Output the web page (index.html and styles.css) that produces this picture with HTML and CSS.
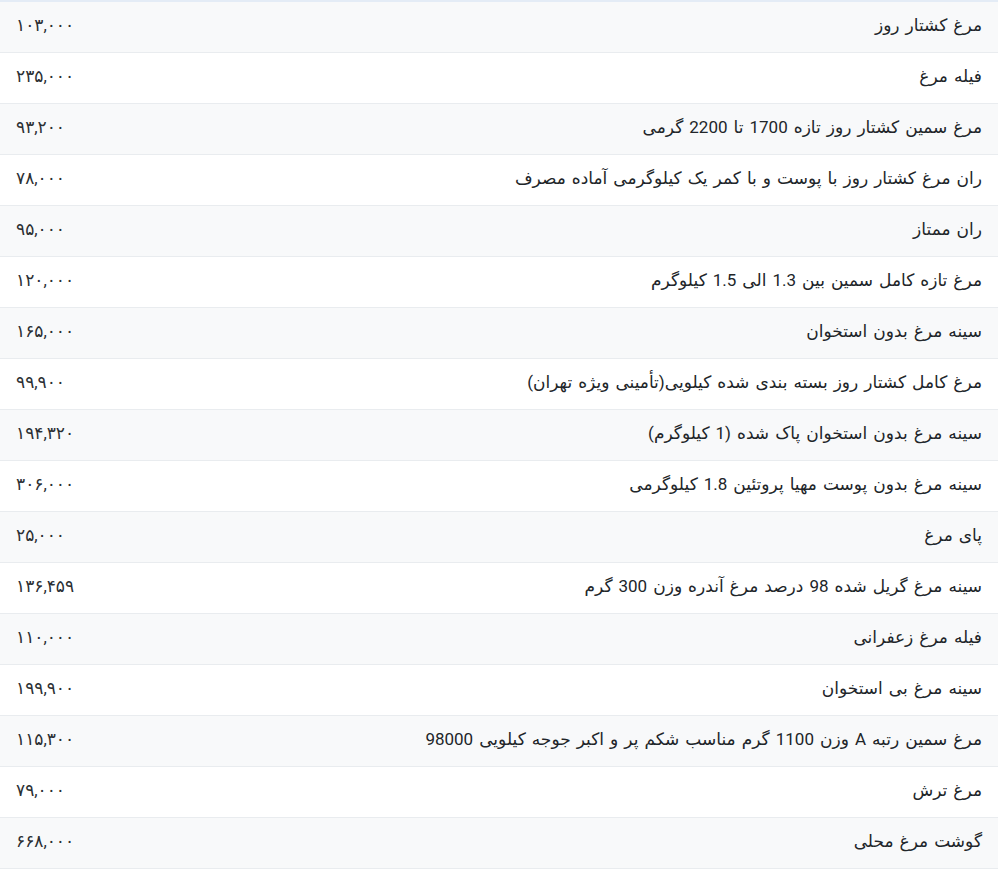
FILE: index.html
```html
<!DOCTYPE html>
<html lang="fa" dir="rtl">
<head>
<meta charset="utf-8">
<title>قیمت مرغ</title>
<link rel="stylesheet" href="styles.css">
</head>
<body>
<table class="price-table">
<tbody>
<tr><td class="name">مرغ کشتار روز</td><td class="price">۱۰۳,۰۰۰</td></tr>
<tr><td class="name">فیله مرغ</td><td class="price">۲۳۵,۰۰۰</td></tr>
<tr><td class="name">مرغ سمین کشتار روز تازه 1700 تا 2200 گرمی</td><td class="price">۹۳,۲۰۰</td></tr>
<tr><td class="name">ران مرغ کشتار روز با پوست و با کمر یک کیلوگرمی آماده مصرف</td><td class="price">۷۸,۰۰۰</td></tr>
<tr><td class="name">ران ممتاز</td><td class="price">۹۵,۰۰۰</td></tr>
<tr><td class="name">مرغ تازه کامل سمین بین 1.3 الی 1.5 کیلوگرم</td><td class="price">۱۲۰,۰۰۰</td></tr>
<tr><td class="name">سینه مرغ بدون استخوان</td><td class="price">۱۶۵,۰۰۰</td></tr>
<tr><td class="name">مرغ کامل کشتار روز بسته بندی شده کیلویی(تأمینی ویژه تهران)</td><td class="price">۹۹,۹۰۰</td></tr>
<tr><td class="name">سینه مرغ بدون استخوان پاک شده (1 کیلوگرم)</td><td class="price">۱۹۴,۳۲۰</td></tr>
<tr><td class="name">سینه مرغ بدون پوست مهیا پروتئین 1.8 کیلوگرمی</td><td class="price">۳۰۶,۰۰۰</td></tr>
<tr><td class="name">پای مرغ</td><td class="price">۲۵,۰۰۰</td></tr>
<tr><td class="name">سینه مرغ گریل شده 98 درصد مرغ آندره وزن 300 گرم</td><td class="price">۱۳۶,۴۵۹</td></tr>
<tr><td class="name">فیله مرغ زعفرانی</td><td class="price">۱۱۰,۰۰۰</td></tr>
<tr><td class="name">سینه مرغ بی استخوان</td><td class="price">۱۹۹,۹۰۰</td></tr>
<tr><td class="name">مرغ سمین رتبه A وزن 1100 گرم مناسب شکم پر و اکبر جوجه کیلویی 98000</td><td class="price">۱۱۵,۳۰۰</td></tr>
<tr><td class="name">مرغ ترش</td><td class="price">۷۹,۰۰۰</td></tr>
<tr><td class="name">گوشت مرغ محلی</td><td class="price">۶۶۸,۰۰۰</td></tr>
</tbody>
</table>
</body>
</html>
```
FILE: styles.css
```css
html, body {
  margin: 0;
  padding: 0;
  background: #ffffff;
}
body {
  font-family: Roboto, "DejaVu Sans", sans-serif;
  font-size: 17px;
  color: #212529;
}
.price-table {
  width: 100%;
  border-collapse: collapse;
  border-top: 2px solid #e4ecf6;
}
.price-table td {
  height: 51px;
  padding: 0 16px 3px;
  border-bottom: 1px solid #e9ecef;
  vertical-align: middle;
  box-sizing: border-box;
}
.price-table tr:nth-child(odd) td {
  background: #f8f9fa;
}
.price-table .name {
  text-align: right;
  word-spacing: 1.8px;
}
.price-table .price {
  text-align: left;
  white-space: nowrap;
  color: #2b2f33;
}
```
